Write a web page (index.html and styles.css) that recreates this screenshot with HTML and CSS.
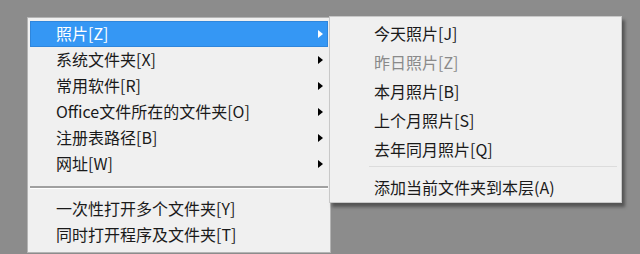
FILE: index.html
```html
<!DOCTYPE html>
<html>
<head>
    <title>Menu</title>
    <link rel="stylesheet" href="styles.css">
</head>
<body>
    <div class="desk">
        <div class="menu main">
            <div class="row active"><span>照片[Z]</span><span class="arrow"></span></div>
            <div class="row"><span>系统文件夹[X]</span><span class="arrow"></span></div>
            <div class="row"><span>常用软件[R]</span><span class="arrow"></span></div>
            <div class="row"><span>Office文件所在的文件夹[O]</span><span class="arrow"></span></div>
            <div class="row"><span>注册表路径[B]</span><span class="arrow"></span></div>
            <div class="row"><span>网址[W]</span><span class="arrow"></span></div>
            <div class="sep"></div>
            <div class="row"><span>一次性打开多个文件夹[Y]</span></div>
            <div class="row"><span>同时打开程序及文件夹[T]</span></div>
        </div>

        <div class="menu sub">
            <div class="srow">今天照片[J]</div>
            <div class="srow disabled">昨日照片[Z]</div>
            <div class="srow">本月照片[B]</div>
            <div class="srow">上个月照片[S]</div>
            <div class="srow">去年同月照片[Q]</div>
            <div class="ssep"></div>
            <div class="srow last">添加当前文件夹到本层(A)</div>
        </div>
    </div>
</body>
</html>
```

FILE: styles.css
```css
* {
    box-sizing: border-box;
}

body {
    margin: 0;
    background-color: #8c8c8c;
    font-family: "Noto Sans CJK SC", "Noto Sans", sans-serif;
    font-size: 16px;
    color: #1a1a1a;
}

.desk {
    position: relative;
    width: 640px;
    height: 254px;
    overflow: hidden;
    padding: 17px 0 0 27px;
}

.menu {
    background-color: #f0f0f0;
}

/* Main menu */
.main {
    width: 304px;
    height: 236px;
    padding: 3px 2px;
    border: 1px solid #b4b4b4;
}

.row {
    display: flex;
    align-items: center;
    justify-content: space-between;
    height: 26px;
    padding: 0 5px 2px 26px;
}

.row .arrow {
    margin-top: 2px;
}

.row.active {
    background-color: #3597f4;
    color: #ffffff;
    outline: 1px solid #2f86dc;
    outline-offset: -1px;
}

.arrow {
    width: 0;
    height: 0;
    border-top: 4px solid transparent;
    border-bottom: 4px solid transparent;
    border-left: 5px solid #000000;
}

.row.active .arrow {
    border-left-color: #ffffff;
}

.sep {
    height: 19px;
    display: flex;
    align-items: center;
}

.sep::before {
    content: "";
    flex: 1;
    height: 2px;
    margin-top: 2px;
    background-color: #a0a0a0;
    border-bottom: 1px solid #ffffff;
}

/* Submenu flyout */
.sub {
    position: absolute;
    left: 329px;
    top: 16px;
    width: 293px;
    padding: 3px 4px 0 0;
    border: 1px solid #c8c8c8;
    box-shadow: 3px 4px 3px rgba(40, 40, 40, 0.55);
}

.srow {
    height: 29px;
    display: flex;
    align-items: center;
    padding: 0 0 3px 44px;
}

.srow.last {
    height: 28px;
}

.srow.disabled {
    color: #8a8a8a;
}

.ssep {
    height: 1px;
    margin: 1px 0 7px 39px;
    background-color: #dcdcdc;
}
```
